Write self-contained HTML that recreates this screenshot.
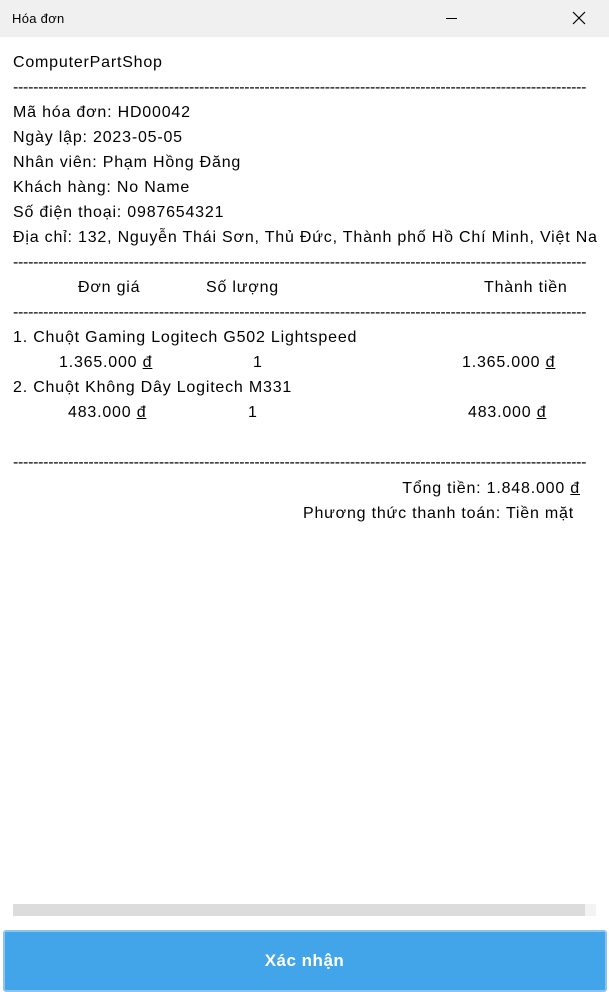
<!DOCTYPE html>
<html><head><meta charset="utf-8"><style>
body{margin:0;width:609px;height:991px;position:relative;background:#fff;font-family:"Liberation Sans","Noto Sans CJK SC",sans-serif;color:#000;overflow:hidden}
.t{position:absolute;font-size:16px;line-height:20px;white-space:nowrap;letter-spacing:0.8px}
.d{position:absolute;left:13px;width:574px;overflow:hidden;font-size:16px;line-height:20px;white-space:nowrap;letter-spacing:-0.3px}
</style></head><body>
<div style="position:absolute;left:0;top:0;width:609px;height:37px;background:#f0f0f0"></div>
<div class="t" style="left:12px;top:9px;font-size:13px;letter-spacing:0.3px">Hóa đơn</div>
<div style="position:absolute;left:446px;top:18px;width:11px;height:1px;background:#000"></div>
<svg style="position:absolute;left:572px;top:11px" width="14" height="14"><path d="M1 1L13 13M13 1L1 13" stroke="#000" stroke-width="1.2"/></svg>
<div class="t" style="left:13px;top:53px">ComputerPartShop</div>
<div class="d" style="top:78px">------------------------------------------------------------------------------------------------------------------------</div>
<div class="t" style="left:13px;top:103px">Mã hóa đơn: HD00042</div>
<div class="t" style="left:13px;top:128px">Ngày lập: 2023-05-05</div>
<div class="t" style="left:13px;top:153px">Nhân viên: Phạm Hồng Đăng</div>
<div class="t" style="left:13px;top:178px">Khách hàng: No Name</div>
<div class="t" style="left:13px;top:203px">Số điện thoại: 0987654321</div>
<div class="t" style="left:13px;top:228px;width:584px;overflow:hidden">Địa chỉ: 132, Nguyễn Thái Sơn, Thủ Đức, Thành phố Hồ Chí Minh, Việt Nam</div>
<div class="d" style="top:253px">------------------------------------------------------------------------------------------------------------------------</div>
<div class="t" style="left:78px;top:278px">Đơn giá</div>
<div class="t" style="left:206px;top:278px">Số lượng</div>
<div class="t" style="left:484px;top:278px">Thành tiền</div>
<div class="d" style="top:303px">------------------------------------------------------------------------------------------------------------------------</div>
<div class="t" style="left:13px;top:328px">1. Chuột Gaming Logitech G502 Lightspeed</div>
<div class="t" style="left:59px;top:353px">1.365.000 <u>đ</u></div>
<div class="t" style="left:253px;top:353px">1</div>
<div class="t" style="left:462px;top:353px">1.365.000 <u>đ</u></div>
<div class="t" style="left:13px;top:378px">2. Chuột Không Dây Logitech M331</div>
<div class="t" style="left:68px;top:403px">483.000 <u>đ</u></div>
<div class="t" style="left:248px;top:403px">1</div>
<div class="t" style="left:468px;top:403px">483.000 <u>đ</u></div>
<div class="d" style="top:453px">------------------------------------------------------------------------------------------------------------------------</div>
<div class="t" style="right:29px;top:479px">Tổng tiền: 1.848.000 <u>đ</u></div>
<div class="t" style="right:35px;top:504px">Phương thức thanh toán: Tiền mặt</div>
<div style="position:absolute;left:13px;top:904px;width:583px;height:12px;background:#f3f3f3"></div>
<div style="position:absolute;left:13px;top:904px;width:572px;height:12px;background:#dcdcdc"></div>
<div style="position:absolute;left:3px;top:930px;width:600px;height:58px;background:#42a5ea;border:2px solid #8cc3ef;border-radius:3px"></div>
<div class="t" style="left:0;width:609px;text-align:center;top:951px;color:#fff;font-weight:bold;font-size:17px;letter-spacing:0.5px">Xác nhận</div>
</body></html>
